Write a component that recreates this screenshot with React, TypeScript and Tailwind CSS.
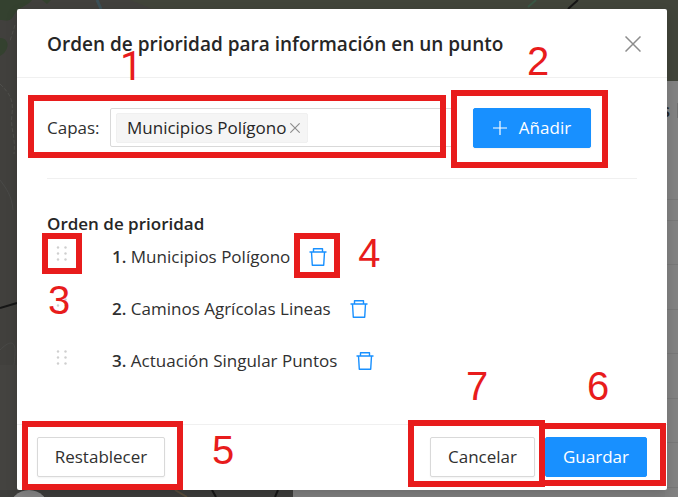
import React from 'react';

interface MarkProps {
  box: string;
  digit: string;
  label: number;
}

const Mark: React.FC<MarkProps> = ({ box, digit, label }) => (
  <>
    <span className={`pointer-events-none absolute z-10 border-6 border-[#e81c1c] ${box}`} />
    <span
      className={`pointer-events-none absolute z-20 text-[40px] leading-10 text-[#e81c1c] ${digit} ${
        label === 1 ? "font-['Roboto',sans-serif]" : "font-['Liberation_Sans',sans-serif]"
      }`}
    >
      {label}
    </span>
  </>
);

const CrossIcon: React.FC<{ className: string; strokeWidth: number }> = ({ className, strokeWidth }) => (
  <svg viewBox="0 0 16 16" className={className} fill="none" stroke="currentColor" strokeWidth={strokeWidth} aria-hidden="true">
    <path d="M0.5 0.5 15.5 15.5M15.5 0.5 0.5 15.5" />
  </svg>
);

const TrashIcon: React.FC = () => (
  <svg viewBox="0 0 20 20" className="size-5" fill="none" stroke="currentColor" strokeWidth="1.4" strokeLinejoin="round" aria-hidden="true">
    <path d="M1.500 5h17M5.500 5V1.700h9V5M3.500 5l.8 13.300h11.400L16.500 5" />
  </svg>
);

const DragIcon: React.FC = () => (
  <svg viewBox="0 0 12 15" className="h-[15px] w-3" fill="#cfcfcf" aria-hidden="true">
    {[2, 8, 14].map((y) => (
      <g key={y}>
        <circle cx="2" cy={y - 0.5} r="1.2" />
        <circle cx="9.5" cy={y - 0.5} r="1.2" />
      </g>
    ))}
  </svg>
);

const MapBackdrop: React.FC = () => (
  <div className="absolute inset-0 overflow-hidden bg-[#41403d]" aria-hidden="true">
    <svg className="absolute inset-0 h-full w-full" viewBox="0 0 678 497" preserveAspectRatio="none" fill="none">
      <path d="M130 0h548v82H200L150 8z" fill="#41443a" />
      <path d="M0 0h32c-4 6-14 7-18 15S6 20 0 20zM0 38c6 0 9 5 7 10S3 54 0 56zM42 0h9l-4 4z" fill="#34412f" />
      <path d="M97 0l4 9" stroke="#3c5057" strokeWidth="3" />
      <path d="M15 25l-5 16M0 84c8 8 14 14 12 30s4 22 2 40" stroke="#50504c" strokeDasharray="4 2" />
      <path d="M0 308l17-5M578 0l-10 9" stroke="#161616" strokeWidth="2" />
      <path d="M528 7l8-7" stroke="#3a5745" strokeWidth="2" />
      <path d="M0 180c6 8 12 16 13 30M0 350c8-8 16-12 15 4s-2 16-7 20" stroke="#4a4a48" />
      <path d="M0 365h17v132H0z" fill="#444340" />
      <path d="M0 490h293v7H0z" fill="#3d3d3b" />
      <path d="M212 490l4 7M275 497l3-7" stroke="#171717" strokeWidth="2" />
      <path d="M175 490l12 7" stroke="#594d3b" strokeWidth="2" />
      <circle cx="29" cy="510" r="20" fill="#858585" />
      <path d="M293 490h385v7H293z" fill="#7f7f7f" />
      <path d="M665 81h13v416h-13z" fill="#828282" />
      <path d="M667 199.500h11M667 220.500h11M667 264.500h11M667 309.500h11M667 353.500h11M667 398.500h11M667 442.500h11M667 487.500h11" stroke="#787878" />
      <path d="M677 103h1v15h-1z" fill="#707070" />
    </svg>
    <span className="absolute top-[98px] right-2 text-[18px] leading-6 font-semibold text-[#252525]">s</span>
  </div>
);

const layers = [
  { id: 'municipios', name: 'Municipios Polígono' },
  { id: 'caminos', name: 'Caminos Agrícolas Lineas' },
  { id: 'actuacion', name: 'Actuación Singular Puntos' },
];

const buttonBase = 'h-10 rounded-xs border text-[17px] leading-6 whitespace-nowrap';

const App: React.FC = () => {
  return (
    <div className="relative min-h-screen pt-[9px] pr-[11px] pb-[7px] pl-[17px] font-['Open_Sans',sans-serif] text-[17px] leading-6 text-[#303030]">
      <MapBackdrop />

      <div role="dialog" aria-labelledby="dialog-title" className="relative rounded-xs bg-white shadow-[0_4px_12px_rgba(0,0,0,0.15)]">
        <header className="flex items-center justify-between border-b border-[#f0f0f0] px-[30px] pt-[23px] pb-[21px]">
          <h1 id="dialog-title" className="text-[19px] leading-6 font-semibold text-[#262626]">
            Orden de prioridad para información en un punto
          </h1>
          <button type="button" aria-label="Cerrar" className="-my-2 -mr-3 p-2 text-[#8c8c8c]">
            <CrossIcon className="size-4" strokeWidth={1.5} />
          </button>
        </header>

        <main className="px-[30px] pt-[30px] pb-[37px]">
          <div className="flex items-start border-b border-[#f0f0f0] pb-[30px]">
            <div className="relative flex flex-1 items-center">
              <label htmlFor="capas" className="w-[63px]">Capas:</label>
              <div className="flex h-[39px] flex-1 items-center rounded-xs border border-[#d9d9d9] px-[5px]">
                <span className="flex h-[30px] shrink-0 items-center gap-1 rounded-xs border border-[#f0f0f0] bg-[#f5f5f5] pr-[7px] pl-[10px] text-[#262626]">
                  Municipios Polígono
                  <button type="button" aria-label="Quitar Municipios Polígono" className="text-[#8c8c8c]">
                    <CrossIcon className="size-[10px]" strokeWidth={1.8} />
                  </button>
                </span>
                <input id="capas" type="text" className="h-8 w-full min-w-0 px-1 outline-none" />
              </div>
              <Mark label={1} box="-top-[13px] right-[7px] -bottom-[11px] -left-[19px]" digit="-top-[61px] left-[73px]" />
            </div>
            <div className="relative mr-[46px] ml-5">
              <button type="button" className={`${buttonBase} flex w-[118px] items-center justify-center gap-3 border-[#1890ff] bg-[#1890ff] text-white shadow-xs`}>
                <svg viewBox="0 0 14 14" className="size-[14px]" stroke="currentColor" strokeWidth="1.2" aria-hidden="true">
                  <path d="M7 0v14M0 7h14" />
                </svg>
                Añadir
              </button>
              <Mark label={2} box="-top-[18px] -right-[17px] -bottom-5 -left-[22px]" digit="-top-[67px] left-[54px]" />
            </div>
          </div>

          <h2 className="pt-[33px] font-semibold text-[#262626]">Orden de prioridad</h2>
          <ol className="-mt-[5px]">
            {layers.map((layer, index) => (
              <li key={layer.id} className="flex h-[52px] items-center">
                <div className="relative ml-[9px] w-[56px] pb-2">
                  <button type="button" aria-label={`Mover ${layer.name}`} className="block cursor-move">
                    <DragIcon />
                  </button>
                  {index === 0 && <Mark label={3} box="-top-[13px] -left-[14px] h-[41px] w-10" digit="top-[34px] -left-2" />}
                </div>
                <span>
                  <span className="font-semibold">{index + 1}.</span> {layer.name}
                </span>
                <div className="relative ml-[18px]">
                  <button type="button" aria-label={`Eliminar ${layer.name}`} className="block text-[#1890ff]">
                    <TrashIcon />
                  </button>
                  {index === 0 && <Mark label={4} box="-top-[14px] -left-[14px] h-[45px] w-[46px]" digit="-top-[14px] left-[50px]" />}
                </div>
              </li>
            ))}
          </ol>
        </main>

        <footer className="flex items-center gap-[10px] border-t border-[#f0f0f0] px-5 pt-3 pb-[13px]">
          <div className="relative mr-auto">
            <button type="button" className={`${buttonBase} w-32 border-[#d9d9d9] bg-white shadow-xs`}>Restablecer</button>
            <Mark label={5} box="-top-4 -right-[18px] -bottom-[13px] -left-[15px]" digit="-top-[7px] left-[175px]" />
          </div>
          <div className="relative">
            <button type="button" className={`${buttonBase} w-[105px] border-[#d9d9d9] bg-white shadow-xs`}>Cancelar</button>
            <Mark label={7} box="-top-[17px] -right-[10px] -bottom-[10px] -left-[22px]" digit="-top-[71px] left-[36px]" />
          </div>
          <div className="relative">
            <button type="button" className={`${buttonBase} w-[102px] border-[#1890ff] bg-[#1890ff] text-white`}>Guardar</button>
            <Mark label={6} box="-top-[14px] -right-[19px] -bottom-[9px] -left-[6px]" digit="-top-[71px] left-[42px]" />
          </div>
        </footer>
      </div>
    </div>
  );
};

export default App;
